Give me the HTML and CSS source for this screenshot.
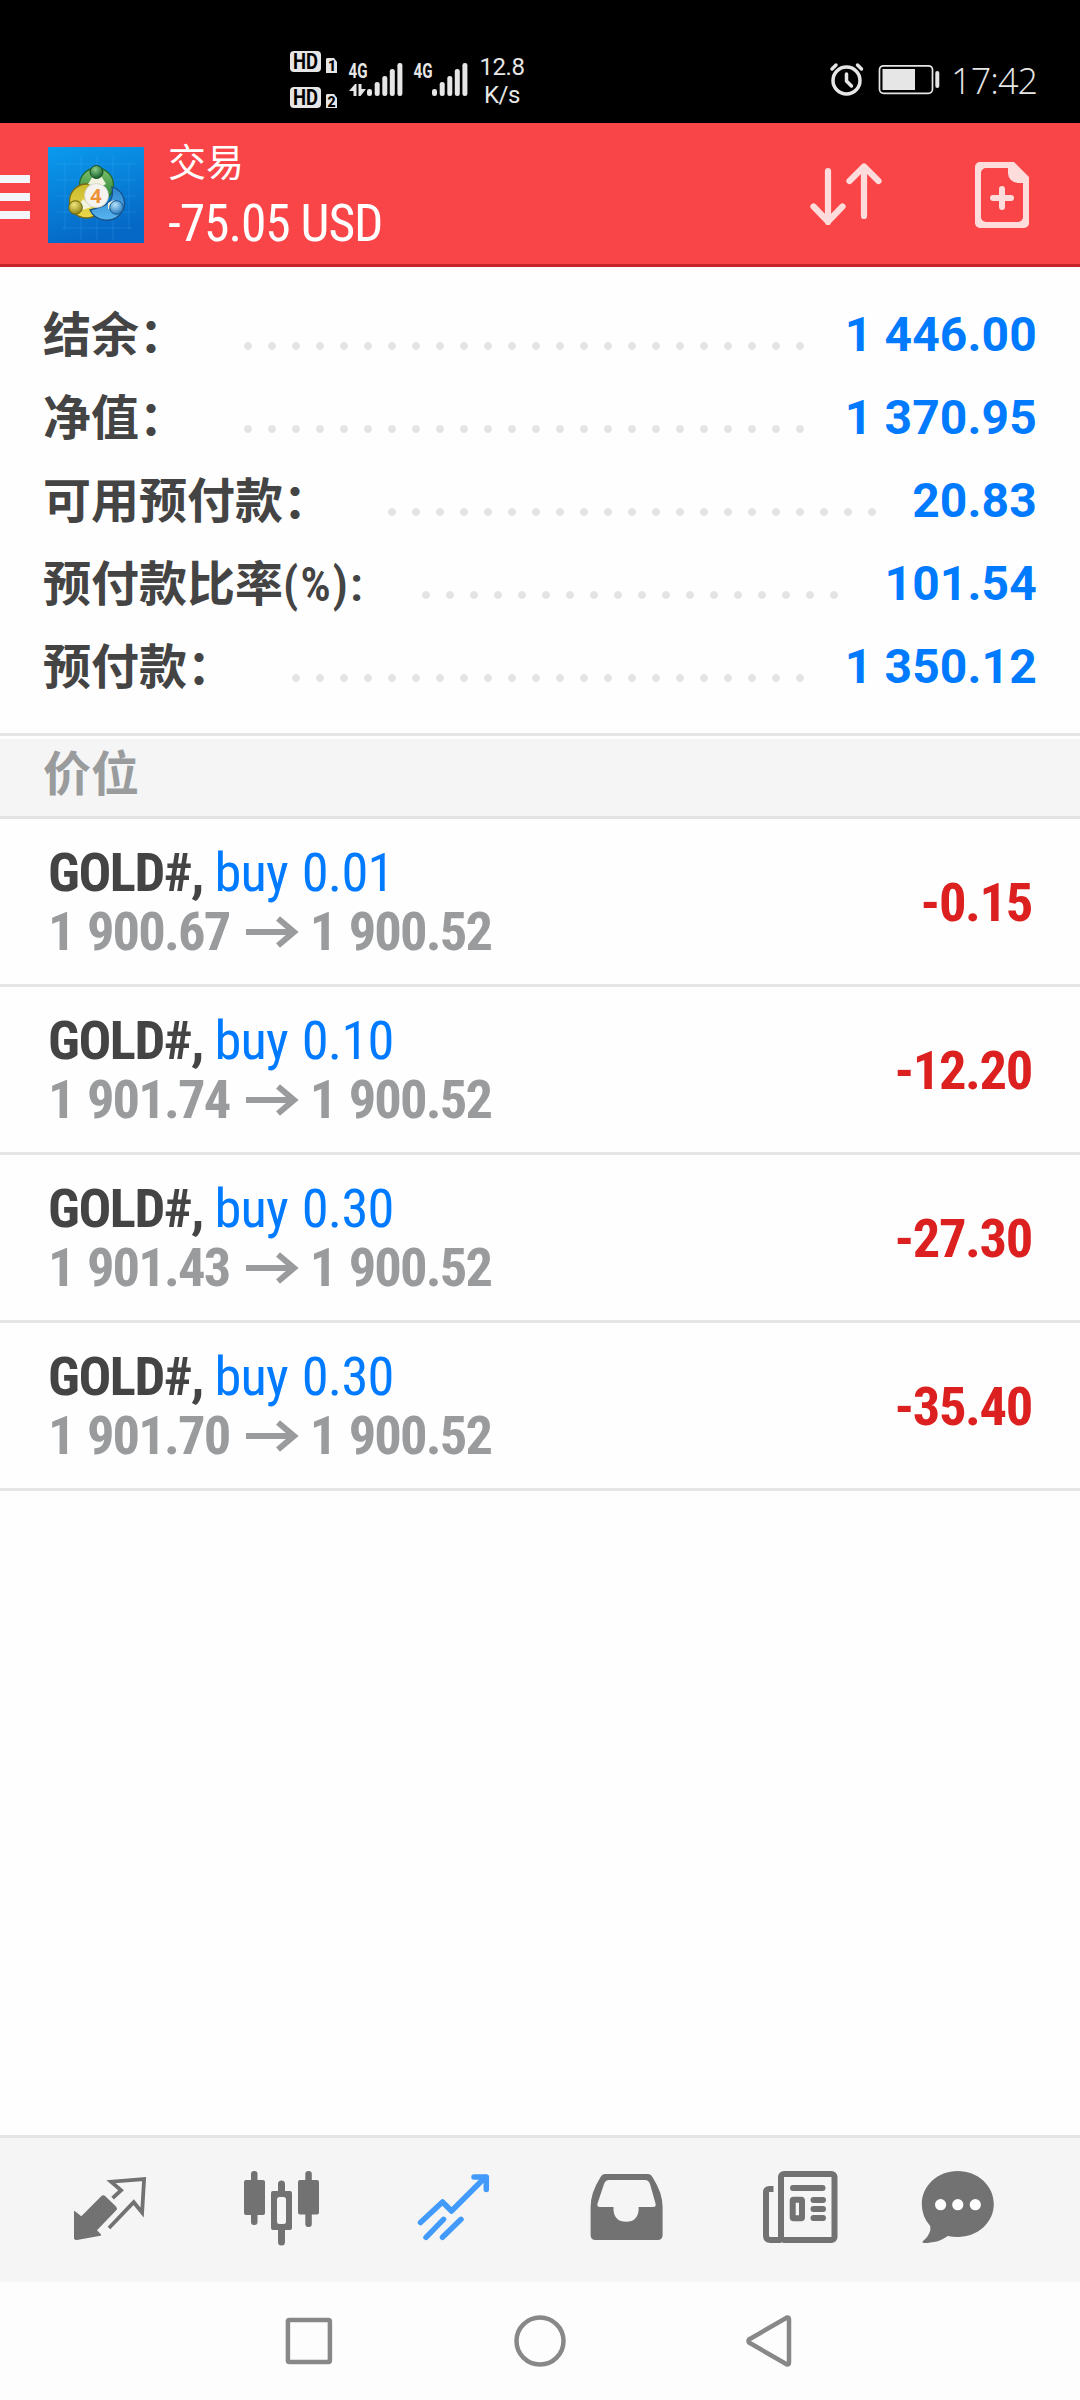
FILE: index.html
```html
<!DOCTYPE html>
<html lang="zh-CN">
<head>
<meta charset="utf-8">
<title>交易</title>
<link rel="stylesheet" href="styles.css">
</head>
<body>
<div class="screen">
  <div class="status">
    <svg class="status-net" width="180" height="70" viewBox="285 45 180 70">
      <g fill="#e6e6e6">
        <rect x="290" y="51" width="31" height="21" rx="4"/>
        <rect x="290" y="87" width="31" height="21" rx="4"/>
        <path d="M327 58h7l3 4v11h-11v-14zM327 94h7l3 4v10h-11v-13z"/>
        <rect x="367" y="89" width="5" height="7" rx="2.3"/><rect x="374.700" y="82" width="5" height="14" rx="2.3"/><rect x="382.300" y="76" width="5" height="20" rx="2.3"/><rect x="389.800" y="69" width="5" height="27" rx="2.3"/><rect x="397.400" y="63" width="5" height="33" rx="2.3"/>
        <rect x="432" y="89" width="5" height="7" rx="2.3"/><rect x="439.700" y="82" width="5" height="14" rx="2.3"/><rect x="447.300" y="76" width="5" height="20" rx="2.3"/><rect x="454.800" y="69" width="5" height="27" rx="2.3"/><rect x="462.400" y="63" width="5" height="33" rx="2.3"/>
        <path d="M349 91l6-7h1.500v12h-3v-5zM358.500 84h3v5h4.500l-5.500 7h-2z"/>
      </g>
      <g class="net-text">
        <text x="293" y="69" textLength="25" lengthAdjust="spacingAndGlyphs" class="dark">HD</text>
        <text x="293" y="105" textLength="25" lengthAdjust="spacingAndGlyphs" class="dark">HD</text>
        <text x="328" y="71" class="dark tiny">1</text>
        <text x="327.500" y="107" class="dark tiny">2</text>
        <text x="348.500" y="77.500" textLength="19" lengthAdjust="spacingAndGlyphs" class="lte">4G</text>
        <text x="413.500" y="77.500" textLength="19" lengthAdjust="spacingAndGlyphs" class="lte">4G</text>
      </g>
    </svg>
    <div class="speed">12.8<br>K/s</div>
    <svg class="status-power" width="110" height="40" viewBox="826 60 110 40">
      <g fill="none" stroke="#e6e6e6" stroke-linecap="round">
        <circle cx="846.500" cy="80.500" r="13.500" stroke-width="3.500"/>
        <path d="M846.500 74v7l5 5M832 69l4-4M857.500 65l4 4" stroke-width="3.500"/>
        <rect x="879.500" y="65.800" width="53" height="27.500" rx="4" stroke-width="1.700"/>
      </g>
      <path d="M882.500 69H915V90H882.500z" fill="#e6e6e6"/>
      <rect x="935.300" y="71" width="4" height="17" rx="2" fill="#e6e6e6"/>
    </svg>
    <div class="clock">17:42</div>
  </div>

  <header class="header">
    <div class="menu"><i></i><i></i><i></i></div>
    <svg class="logo" width="96" height="96" viewBox="0 0 96 96">
      <defs>
        <linearGradient id="sky" x1="0" y1="0" x2=".3" y2="1"><stop offset="0" stop-color="#0a9bee"/><stop offset="1" stop-color="#0568c6"/></linearGradient>
        <linearGradient id="gr" x1="0" y1="0" x2="0" y2="1"><stop offset="0" stop-color="#7fc36a"/><stop offset="1" stop-color="#1f7a34"/></linearGradient>
        <linearGradient id="ye" x1="0" y1="0" x2="0" y2="1"><stop offset="0" stop-color="#c9b92c"/><stop offset="1" stop-color="#e9d94a"/></linearGradient>
        <linearGradient id="bl" x1="0" y1="0" x2="0" y2="1"><stop offset="0" stop-color="#2d86cf"/><stop offset="1" stop-color="#58b4ee"/></linearGradient>
        <radialGradient id="gb" cx=".4" cy=".3" r=".7"><stop offset="0" stop-color="#8fce8a"/><stop offset="1" stop-color="#14602c"/></radialGradient>
        <radialGradient id="yb" cx=".4" cy=".3" r=".7"><stop offset="0" stop-color="#f0e77c"/><stop offset="1" stop-color="#8d8214"/></radialGradient>
        <radialGradient id="bb" cx=".4" cy=".3" r=".7"><stop offset="0" stop-color="#b5e0fb"/><stop offset="1" stop-color="#2579bd"/></radialGradient>
      </defs>
      <path fill="url(#sky)" d="M0 0h96v96H0z"/>
      <path d="M17 15v68M33 8v85M49 8v85M65 8v85M81 15v68M8 17h80M8 33h80M8 49h80M8 65h80M14 81h70" stroke="#4ab4f5" stroke-opacity=".22" stroke-width="1" fill="none"/>
      <circle cx="48.500" cy="38" r="17" fill="url(#gr)" stroke="#24682c" stroke-width="1.300"/>
      <circle cx="38.500" cy="54" r="17" fill="url(#ye)" stroke="#746c17" stroke-width="1.300"/>
      <path d="M42 63a18 17 0 1 0 22-23q3 15-11 20z" fill="url(#bl)" stroke="#174f86" stroke-width="1.300"/>
      <path d="M40 37l5-8h8l5 8-8 4zM31 58l4-6 9 8-10 3zM60 56l6-3 3 8-9 1z" fill="#f1f3df"/>
      <circle cx="48.500" cy="25" r="6.500" fill="url(#gb)" stroke="#174f25"/>
      <circle cx="27.500" cy="60.500" r="6.800" fill="url(#yb)" stroke="#67600f"/>
      <circle cx="68.500" cy="60.500" r="6.800" fill="url(#bb)" stroke="#17558c"/>
      <circle cx="48.500" cy="48.500" r="12" fill="#f4f3f0" stroke="#cfcfc7" stroke-width=".8"/>
      <text x="48" y="55.500" class="logo-four">4</text>
    </svg>
    <div class="titles">
      <div class="title">交易</div>
      <div class="total">-75.05 USD</div>
    </div>
    <svg class="sort" width="80" height="80" viewBox="806 155 80 80">
      <path d="M828 172v51M813.500 207.500l14.500 15 14.500-15M864 217v-48M849.500 182l14.500-14.500L878.500 182" fill="none" stroke="#ffdcdc" stroke-width="6.200" stroke-linecap="round" stroke-linejoin="round"/>
    </svg>
    <svg class="new-order" width="60" height="76" viewBox="972 157 60 76">
      <path fill="#ffdcdc" fill-rule="evenodd" d="M980 162h34l15 15v46a5 5 0 0 1-5 5h-44a5 5 0 0 1-5-5v-56a5 5 0 0 1 5-5zM986 168a5 5 0 0 0-5 5v44a5 5 0 0 0 5 5h32a5 5 0 0 0 5-5V183h-5a10 10 0 0 1-10-10v-5z"/>
      <path d="M1002 189v18M993 198h18" stroke="#ffdcdc" stroke-width="6" stroke-linecap="round"/>
    </svg>
  </header>

  <section class="summary">
    <div class="line"><span class="label">结余：</span><span class="leader" style="width:576px"></span><span class="value">1 446.00</span></div>
    <div class="line"><span class="label">净值：</span><span class="leader" style="width:576px"></span><span class="value">1 370.95</span></div>
    <div class="line"><span class="label">可用预付款：</span><span class="leader" style="width:504px"></span><span class="value">20.83</span></div>
    <div class="line"><span class="label">预付款比率<span class="latin">(%):</span></span><span class="leader" style="width:432px"></span><span class="value">101.54</span></div>
    <div class="line"><span class="label">预付款：</span><span class="leader" style="width:528px"></span><span class="value">1 350.12</span></div>
  </section>

  <div class="section">价位</div>

  <main class="positions">
    <div class="position"><div><div class="deal"><b>GOLD#,</b> <span>buy 0.01</span></div><div class="price">1 900.67 <svg width="52" height="30" viewBox="0 0 52 30"><path d="M0 15H49M32 1.500l16 13.500L32 28.500" /></svg> 1 900.52</div></div><div class="profit">-0.15</div></div>
    <div class="position"><div><div class="deal"><b>GOLD#,</b> <span>buy 0.10</span></div><div class="price">1 901.74 <svg width="52" height="30" viewBox="0 0 52 30"><path d="M0 15H49M32 1.500l16 13.500L32 28.500" /></svg> 1 900.52</div></div><div class="profit">-12.20</div></div>
    <div class="position"><div><div class="deal"><b>GOLD#,</b> <span>buy 0.30</span></div><div class="price">1 901.43 <svg width="52" height="30" viewBox="0 0 52 30"><path d="M0 15H49M32 1.500l16 13.500L32 28.500" /></svg> 1 900.52</div></div><div class="profit">-27.30</div></div>
    <div class="position"><div><div class="deal"><b>GOLD#,</b> <span>buy 0.30</span></div><div class="price">1 901.70 <svg width="52" height="30" viewBox="0 0 52 30"><path d="M0 15H49M32 1.500l16 13.500L32 28.500" /></svg> 1 900.52</div></div><div class="profit">-35.40</div></div>
  </main>

  <nav class="tabs">
    <svg viewBox="26 2138 170 144">
      <path d="M74 2212v-1q1 0 2 1l5.300 4.300L101 2196.500q2.300-2.500 4.600 0L116 2206.500q1.800 2 0 4L97 2230.300l4 4.200q.6 1-.6 1.300L77 2240q-3 0-3-2z" fill="#727272"/>
      <path d="M112.600 2198.200l8.500-8-10-8.500 33-2.700-2 33.500-8.400-10.300-24.700 25.800" fill="none" stroke="#727272" stroke-width="3.800"/>
    </svg>
    <svg viewBox="196 2138 170 144" fill="#727272">
      <rect x="244" y="2180" width="21" height="35" rx="2"/><rect x="251" y="2171" width="6.500" height="54" rx="3"/>
      <path fill-rule="evenodd" d="M273 2191h17q2 0 2 2v35q0 2-2 2h-17q-2 0-2-2v-35q0-2 2-2zM279.500 2197q-2.500 0-2.500 2.500v22q0 2.500 2.500 2.500h4q2.500 0 2.500-2.500v-22q0-2.500-2.500-2.500z"/>
      <path d="M278 2192v-8a3.500 3.500 0 0 1 7 0v8zM278 2229h7v13a3.500 3.500 0 0 1-7 0z"/>
      <rect x="298" y="2180" width="21" height="34.500" rx="2"/><rect x="305.300" y="2171" width="6.500" height="56" rx="3"/>
    </svg>
    <svg viewBox="366 2138 170 144" fill="none" stroke="#429bfb" stroke-width="5.500" stroke-linecap="round" stroke-linejoin="round">
      <path d="M420.500 2222.500l22-20.500 9 9 34-34M474 2177h12.300v12.500M426 2237.300l17.500-18M442.500 2237.300l18.500-18"/>
    </svg>
    <svg viewBox="536 2138 170 144" fill="#727272">
      <path fill-rule="evenodd" d="M605 2174h43q3 0 5 4 9.600 15 9.600 29v28q0 5-5 5h-62q-5 0-5-5v-28q0-14 9.400-29 2-4 5-4zM609 2180q-3.500 0-5 4l-6.500 19.500q-.8 3.500 2.500 3.500h13.500v3q1 11.800 12.600 11.800 11.500 0 12.500-11.800v-3h14.400q3.500 0 2.500-3.500L650 2184q-1.500-4-5-4z"/>
    </svg>
    <svg viewBox="706 2138 170 144" fill="none" stroke="#727272" stroke-width="6">
      <rect x="781" y="2174" width="53.500" height="66" rx="3"/>
      <path d="M773.500 2189h-4q-3.500 0-3.500 3.500v43q0 4.500 4.500 4.500H781"/>
      <path d="M793 2188h29.500M813.500 2200h9.500M813.500 2209h9.500M813.500 2218h9.500" stroke-linecap="round"/>
      <rect x="792.700" y="2199.700" width="9.300" height="18.600" rx="1"/>
    </svg>
    <svg viewBox="876 2138 170 144">
      <path d="M957.700 2171c20 0 36.100 14.500 36.100 33s-16 33-36.100 33q-5 0-10-1c-7 5-14 7-24 7q-2.500-.8 0-2.500 8-7 6.500-14.500-8.400-9.500-8.400-22c0-18.500 16-33 35.900-33z" fill="#727272"/>
      <g fill="#fff"><circle cx="940.600" cy="2204.700" r="5.600"/><circle cx="957.800" cy="2204.700" r="5.600"/><circle cx="975.300" cy="2204.700" r="5.600"/></g>
    </svg>
  </nav>

  <div class="system-nav">
    <svg width="60" height="60" viewBox="0 0 60 60"><rect x="8.900" y="9" width="42" height="42" rx="1.500"/></svg>
    <svg width="60" height="60" viewBox="0 0 60 60"><circle cx="30" cy="30" r="23.500"/></svg>
    <svg width="60" height="60" viewBox="0 0 60 60"><path d="M8 28.500L46 6.500q2 0 2 2v43q0 2-2 2L8 31.500q-1-1.500 0-3z"/></svg>
  </div>
</div>
</body>
</html>
```
FILE: styles.css
```css
* { box-sizing: border-box; }
body { margin: 0; background: #fff; font-family: Roboto, "Noto Sans CJK SC", sans-serif; }
svg { display: block; overflow: visible; }
.screen { width: 1080px; height: 2400px; display: flex; flex-direction: column; background: #fefefe; }

.status { height: 123px; flex: none; background: #000; color: #e6e6e6; display: flex; align-items: flex-start; padding-top: 45px; }
.status-net { margin-left: 285px; }
.speed { width: 60px; margin-left: 7px; margin-top: 8px; font-size: 24px; line-height: 28px; text-align: center; letter-spacing: -.4px; }
.status-power { margin-left: 294px; margin-top: 15px; }
.clock { margin-left: 15px; margin-top: 11px; font: 300 36px/50px "Open Sans", sans-serif; letter-spacing: -.9px; }
.net-text { font-family: Roboto, sans-serif; font-weight: 700; font-size: 22px; fill: #e6e6e6; }
.net-text .dark { fill: #000; }
.net-text .tiny { font-size: 14px; font-weight: 900; }
.net-text .lte { font-size: 20px; }

.header { height: 144px; flex: none; background: #f94548; border-bottom: 3px solid #c4252b; display: flex; align-items: flex-start; color: #fff; }
.menu { width: 30px; margin-top: 52px; display: flex; flex-direction: column; gap: 10px; }
.menu i { height: 8px; background: #f3f5fb; }
.logo { margin-left: 18px; margin-top: 24px; }
.logo-four { font: 700 20px "Open Sans", sans-serif; fill: #ee9238; text-anchor: middle; }
.titles { width: 638px; margin-left: 24px; padding-top: 10px; }
.title { font-size: 38px; line-height: 54px; font-weight: 400; font-family: "Noto Sans CJK SC", sans-serif; }
.total { font-size: 51.500px; line-height: 74px; font-stretch: 75%; letter-spacing: -1.050px; font-family: "Roboto Condensed", Roboto, sans-serif; }
.sort { margin-top: 31px; }
.new-order { margin-left: 86px; margin-top: 34px; }

.summary { height: 469px; flex: none; border-bottom: 3px solid #e5e5e5; padding: 26px 43px 0 43px; margin-bottom: 3px; }
.line { height: 83px; display: flex; align-items: center; white-space: nowrap; }
.label { height: 83px; font: 700 48px/76px "Noto Sans CJK SC", sans-serif; color: #444; }
.latin { display: inline-block; width: 82px; line-height: 1; font-family: Roboto, sans-serif; font-stretch: 75%; font-weight: 600; letter-spacing: 1.800px; }
.leader { height: 8px; margin: 22px 0 0 49px; background: radial-gradient(circle at 12px 4px, #e4e4e4 3.5px, transparent 4.3px) 0 0 / 24px 8px repeat-x; }
.value { margin-left: auto; font-size: 48px; font-weight: 700; letter-spacing: .15px; color: #007aff; }

.section { height: 80px; flex: none; background: #f5f5f5; border-bottom: 3px solid #e3e3e3; padding-left: 43px; font: 700 48px/62px "Noto Sans CJK SC", sans-serif; color: #999b9d; }

.positions { flex: 1; font-family: "Roboto Condensed", Roboto, sans-serif; font-stretch: 75%; font-size: 54.500px; }
.position { height: 168px; border-bottom: 3px solid #e5e5e5; padding: 22px 48px 0; display: flex; justify-content: space-between; white-space: nowrap; }
.deal { line-height: 63px; height: 59px; color: #007aff; letter-spacing: -.8px; }
.deal span { word-spacing: 2px; }
.deal b { letter-spacing: -1.500px; color: #444; }
.price { line-height: 63px; font-weight: 700; letter-spacing: -1.850px; word-spacing: 2.500px; color: #999b9d; }
.price svg { display: inline-block; fill: none; stroke: #999b9d; stroke-width: 6; margin: 0 -1px 3px 3px; }
.profit { font-weight: 700; letter-spacing: -1.350px; color: #dc1f1f; line-height: 123px; }

.tabs { height: 147px; flex: none; background: #f5f5f5; border-top: 3px solid #e5e5e5; padding-left: 26px; display: flex; }
.tabs svg { width: 170px; height: 144px; }
.system-nav { height: 118px; flex: none; background: #fdfdfd; display: flex; justify-content: center; gap: 171px; padding-top: 29px; }
.system-nav svg { fill: none; stroke: #888; stroke-width: 4.500; }
```
